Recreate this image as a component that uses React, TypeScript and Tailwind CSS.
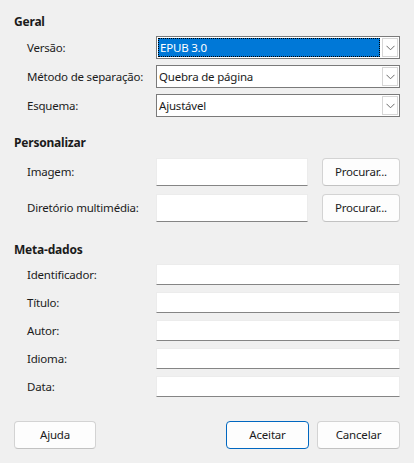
import React from "react";

// --- small building blocks ---
const Chevron = () => (
  <svg width="9" height="6" viewBox="0 0 9 6" fill="none">
    <path d="M0.5 0.8 L4.5 4.8 L8.5 0.8" stroke="#6b6b6b" strokeWidth="1" />
  </svg>
);

const Combo: React.FC<{ value: string; focused?: boolean }> = ({ value, focused }) => (
  <div className="flex h-[23px] w-full border border-[#7a7a7a] bg-white">
    <div className="flex-1 p-px">
      <div
        className={
          focused
            ? "flex h-full items-center border border-dotted border-black bg-[#0078d7] pl-px text-white"
            : "flex h-full items-center pl-px"
        }
      >
        {value}
      </div>
    </div>
    <div className="m-px flex w-[16px] items-center justify-center border border-[#d6d6d6] bg-white">
      <Chevron />
    </div>
  </div>
);

const TextBox: React.FC<{ className?: string }> = ({ className = "" }) => (
  <div
    className={
      "border border-[#ececec] border-b-[#858585] bg-white " + className
    }
  />
);

const Btn: React.FC<{ label: string; primary?: boolean; className?: string }> = ({
  label,
  primary,
  className = "",
}) => (
  <button
    className={
      "flex items-center justify-center rounded-[4px] border bg-[#fdfdfd] text-[#1b1b1b] " +
      (primary ? "border-[#0067c0] " : "border-[#d3d3d3] border-b-[#c2c2c2] ") +
      className
    }
  >
    {label}
  </button>
);

const Row: React.FC<{ label: string; children: React.ReactNode }> = ({ label, children }) => (
  <div className="flex items-center">
    <div className="w-[142px] shrink-0 pl-[13px]">{label}</div>
    <div className="flex flex-1 items-center">{children}</div>
  </div>
);

const Heading: React.FC<{ title: string }> = ({ title }) => (
  <div className="h-[16px] text-[12px] font-bold leading-[16px]">{title}</div>
);

// --- Main App ---
const App: React.FC = () => {
  const meta = ["Identificador:", "Título:", "Autor:", "Idioma:", "Data:"];

  return (
    <div className="h-[463px] w-[414px] bg-[#f0f0f0] px-[14px] pt-[14px] font-['Noto_Sans',sans-serif] text-[11.5px] leading-[16px] tracking-[-0.2px] text-[#1b1b1b]">
      {/* Geral */}
      <Heading title="Geral" />
      <div className="mt-[6px] flex flex-col gap-[6px]">
        <Row label="Versão:">
          <Combo value="EPUB 3.0" focused />
        </Row>
        <Row label="Método de separação:">
          <Combo value="Quebra de página" />
        </Row>
        <Row label="Esquema:">
          <Combo value="Ajustável" />
        </Row>
      </div>

      {/* Personalizar */}
      <div className="mt-[18px]">
        <Heading title="Personalizar" />
      </div>
      <div className="mt-[7px] flex flex-col gap-[8px]">
        <Row label="Imagem:">
          <TextBox className="h-[28px] w-[152px]" />
          <Btn label="Procurar..." className="ml-[14px] h-[28px] flex-1" />
        </Row>
        <Row label="Diretório multimédia:">
          <TextBox className="h-[28px] w-[152px]" />
          <Btn label="Procurar..." className="ml-[14px] h-[28px] flex-1" />
        </Row>
      </div>

      {/* Meta-dados */}
      <div className="mt-[20px]">
        <Heading title="Meta-dados" />
      </div>
      <div className="mt-[6px] flex flex-col gap-[7px]">
        {meta.map((m) => (
          <Row key={m} label={m}>
            <TextBox className="h-[21px] w-full" />
          </Row>
        ))}
      </div>

      {/* Buttons */}
      <div className="mt-[24px] flex items-center">
        <Btn label="Ajuda" className="h-[28px] w-[82px]" />
        <div className="flex-1" />
        <Btn label="Aceitar" primary className="h-[28px] w-[83px]" />
        <Btn label="Cancelar" className="ml-[8px] h-[28px] w-[83px]" />
      </div>
    </div>
  );
};

export default App;
